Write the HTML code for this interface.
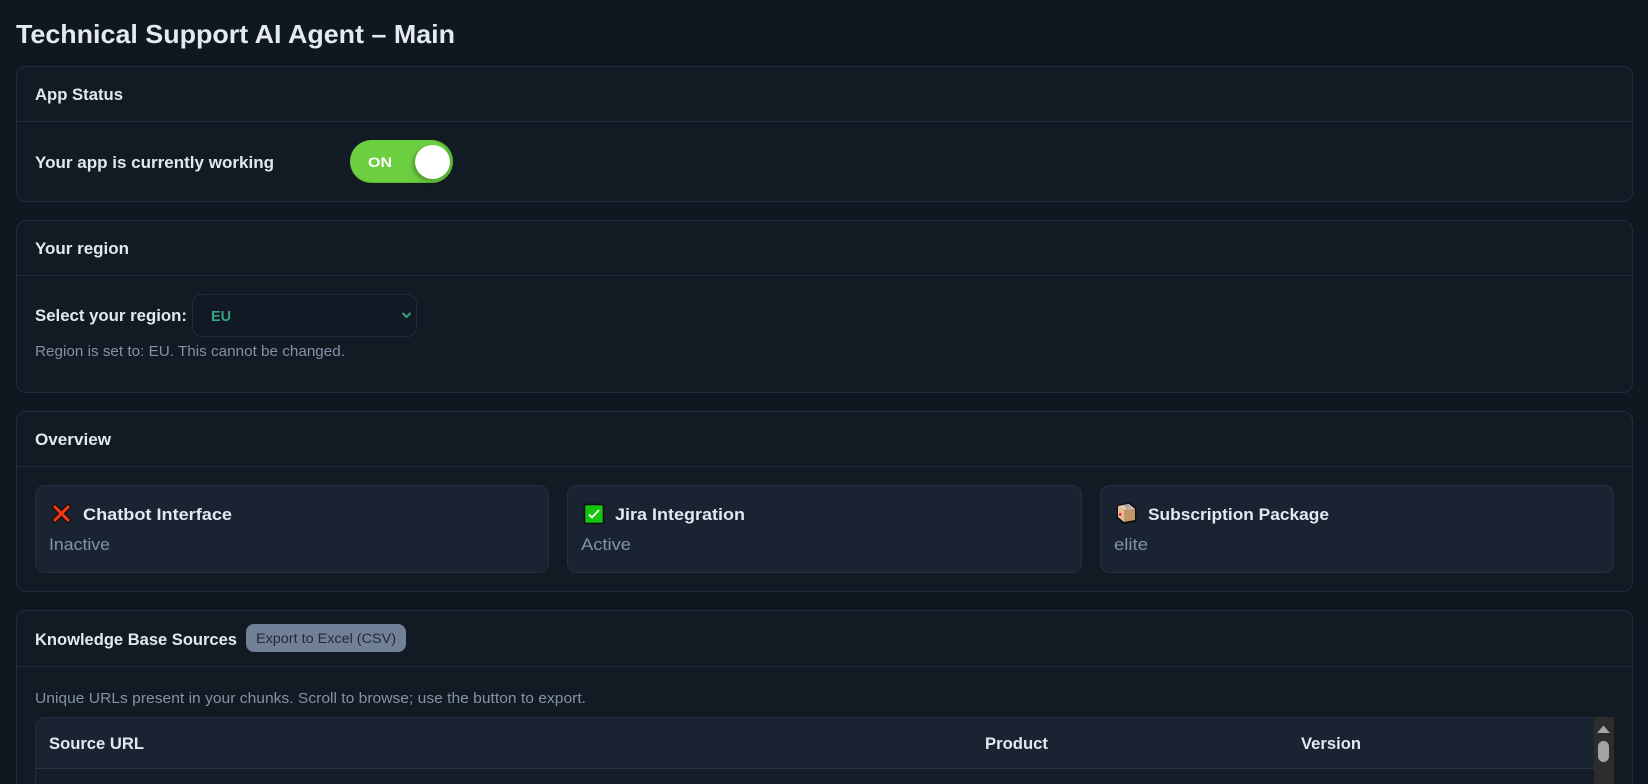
<!DOCTYPE html>
<html><head><meta charset="utf-8"><title>Technical Support AI Agent – Main</title>
<style>
html,body{margin:0;padding:0;width:1648px;height:784px;overflow:hidden;background:#0f1720;}
#w{position:relative;width:1648px;height:784px;overflow:hidden;}
.a{position:absolute;box-sizing:border-box;}
.card{left:16px;width:1617px;background:#121a24;border:1px solid #212c3c;border-radius:10px;}
.line{left:17px;width:1615px;height:1px;background:#212c3c;}
.in{background:#1a2332;border:1px solid #242f41;border-radius:10px;top:485px;height:88px;}
svg.t{position:absolute;left:0;top:0;width:1648px;height:784px;}
text{font-family:"Liberation Sans",Arial,sans-serif;}
.h{font-weight:700;font-size:17px;fill:#e2e8f0;}
.m{font-size:15px;fill:#8492a6;}
.s{font-size:17px;fill:#8492a6;}
</style></head><body><div id="w">
<div class="a card" style="top:66px;height:136px"></div><div class="a line" style="top:121px"></div>
<div class="a card" style="top:220px;height:173px"></div><div class="a line" style="top:275px"></div>
<div class="a card" style="top:411px;height:181px"></div><div class="a line" style="top:466px"></div>
<div class="a card" style="top:610px;height:200px;"></div><div class="a line" style="top:666px"></div>

<div class="a" style="left:350px;top:140px;width:103px;height:43px;border-radius:22px;background:#6ccf40;box-shadow:inset 0 -1px 0 #5ab636,inset -3px 0 0 #5ab636"></div>
<div class="a" style="left:415px;top:145px;width:35px;height:34px;border-radius:50%;background:#fff;box-shadow:-2px 2px 4px rgba(40,80,20,.45)"></div>

<div class="a" style="left:192px;top:294px;width:225px;height:43px;background:#111a24;border:1px solid #212c3c;border-radius:10px"></div>

<div class="a in" style="left:35px;width:514px"></div>
<div class="a in" style="left:567px;width:515px"></div>
<div class="a in" style="left:1100px;width:514px"></div>

<div class="a" style="left:246px;top:624px;width:160px;height:28px;background:#718096;border-radius:8px"></div>

<div class="a" style="left:35px;top:717px;width:1579px;height:80px;background:#1a2332;border:1px solid #212c3c;border-radius:10px 10px 0 0"></div>
<div class="a" style="left:36px;top:768px;width:1558px;height:16px;background:#141d29;border-top:1px solid #263245"></div>
<div class="a" style="left:1594px;top:717px;width:20px;height:67px;background:#2c2c2c"></div>
<div class="a" style="left:1598px;top:741px;width:11px;height:21px;background:#a3a3a3;border-radius:6px"></div>

<svg class="t" viewBox="0 0 1648 784" xmlns="http://www.w3.org/2000/svg">
<text x="16" y="43" font-size="26" font-weight="700" fill="#e5e9f0" textLength="439" lengthAdjust="spacingAndGlyphs">Technical Support AI Agent – Main</text>
<text class="h" x="35" y="100" textLength="88" lengthAdjust="spacingAndGlyphs">App Status</text>
<text class="h" x="35" y="168" textLength="239" lengthAdjust="spacingAndGlyphs">Your app is currently working</text>
<text x="368" y="167" font-size="14" font-weight="700" fill="#fff" textLength="24" lengthAdjust="spacingAndGlyphs">ON</text>
<text class="h" x="35" y="254" textLength="94" lengthAdjust="spacingAndGlyphs">Your region</text>
<text class="h" x="35" y="321" textLength="152" lengthAdjust="spacingAndGlyphs">Select your region:</text>
<text x="211" y="321" font-size="15" font-weight="700" fill="#38a37f" textLength="20" lengthAdjust="spacingAndGlyphs">EU</text>
<path d="M402.500 313l4 4 4-4" fill="none" stroke="#38a37f" stroke-width="2"/>
<text class="m" x="35" y="356" textLength="310" lengthAdjust="spacingAndGlyphs">Region is set to: EU. This cannot be changed.</text>
<text class="h" x="35" y="445" textLength="76" lengthAdjust="spacingAndGlyphs">Overview</text>

<path d="M55 507l13 13M68 507l-13 13" stroke="#1a0a08" stroke-width="5.500" stroke-linecap="square" fill="none"/>
<path d="M55 507l13 13M68 507l-13 13" stroke="#f03a17" stroke-width="3" stroke-linecap="square" fill="none"/>
<text class="h" x="83" y="520" textLength="149" lengthAdjust="spacingAndGlyphs">Chatbot Interface</text>
<text class="s" x="49" y="550" textLength="61" lengthAdjust="spacingAndGlyphs">Inactive</text>

<rect x="584.500" y="504.500" width="19" height="19" fill="#16c60c" stroke="#0b0f14" stroke-width="1.600"/>
<path d="M589 514.500l3 3 7-7.500" fill="none" stroke="#fff" stroke-width="1.800"/>
<text class="h" x="615" y="520" textLength="130" lengthAdjust="spacingAndGlyphs">Jira Integration</text>
<text class="s" x="581" y="550" textLength="50" lengthAdjust="spacingAndGlyphs">Active</text>

<path d="M1117.500 505.500l12-2 6 5v13l-12 2-6-5z" fill="#0b0f14" stroke="#0b0f14" stroke-width="1.500"/>
<path d="M1118 506l6 4v12l-6-5z" fill="#e6bc95"/>
<path d="M1118 506l11-2 6 5-11 1z" fill="#f0cba6"/>
<path d="M1124 510l11-1v11l-11 2z" fill="#c09668"/>
<path d="M1123 505l5-1 4 4-5 1z" fill="#a7a9b0"/>
<rect x="1119" y="513" width="2.500" height="3" fill="#e8344a"/>
<text class="h" x="1148" y="520" textLength="181" lengthAdjust="spacingAndGlyphs">Subscription Package</text>
<text class="s" x="1114" y="550" textLength="34" lengthAdjust="spacingAndGlyphs">elite</text>

<text class="h" x="35" y="645" textLength="202" lengthAdjust="spacingAndGlyphs">Knowledge Base Sources</text>
<text x="256" y="643" font-size="13.500" fill="#1f2937" textLength="140" lengthAdjust="spacingAndGlyphs">Export to Excel (CSV)</text>
<text class="m" x="35" y="703" textLength="551" lengthAdjust="spacingAndGlyphs">Unique URLs present in your chunks. Scroll to browse; use the button to export.</text>
<text class="h" x="49" y="749" textLength="95" lengthAdjust="spacingAndGlyphs">Source URL</text>
<text class="h" x="985" y="749" textLength="63" lengthAdjust="spacingAndGlyphs">Product</text>
<text class="h" x="1301" y="749" textLength="60" lengthAdjust="spacingAndGlyphs">Version</text>
<path d="M1597 733l6.500-7.500 6.500 7.500z" fill="#a3a3a3"/>
</svg>
</div></body></html>
